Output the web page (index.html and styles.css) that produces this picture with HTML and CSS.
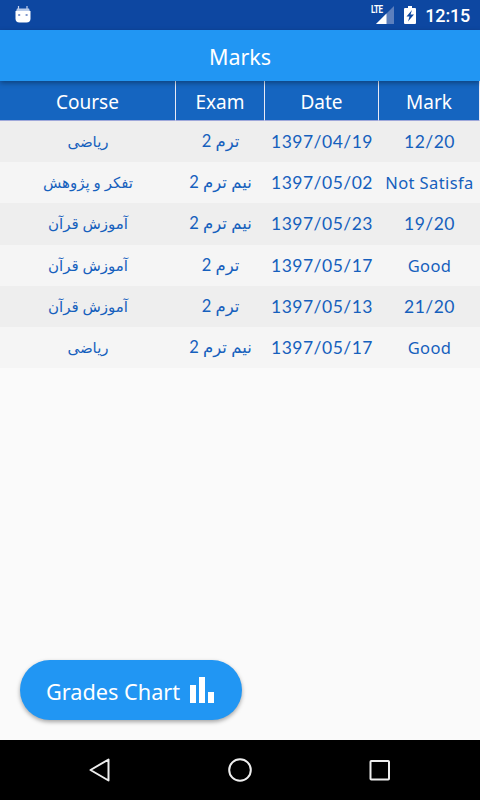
FILE: index.html
```
<!doctype html>
<html lang="en">
  <head>
    <meta charset="utf-8">
    <title>Marks</title>
    <link rel="stylesheet" href="styles.css">
  </head>
  <body>
    <div class="status">
      <svg class="debug" width="16" height="18" viewBox="0 0 16 18">
        <path d="M3.500 1v4M12 1v4" stroke="#c5d3ee" stroke-width="1.2"/>
        <path d="M2 3.500h12l1 3H1z" fill="#b9cbe9"/>
        <path d="M.5 6h15v7.500q0 4-4 4h-7q-4 0-4-4z" fill="#fff"/>
        <path d="M3.200 9h2v2h-2zM10.600 9h2v2h-2z" fill="#8198cc"/>
      </svg>
      <div class="lte"><span>LTE</span>
        <svg width="18" height="18" viewBox="0 0 18 18">
          <path d="M18 0v18H0z" fill="#5c7fbd"/>
          <path d="M10.500 7.500V18H0z" fill="#fff"/>
        </svg>
      </div>
      <svg class="battery" width="12" height="18" viewBox="0 0 12 18">
        <path d="M4 0h4v2h3q1 0 1 1v14q0 1-1 1H1q-1 0-1-1V3q0-1 1-1h3z" fill="#fff"/>
        <path d="M8 4L2.500 10.500h3l-1.500 5 6-7h-3.500z" fill="#0d47a1"/>
      </svg>
      <span class="clock">12:15</span>
    </div>
    <h1>Marks</h1>
    <div class="content">
      <table>
        <colgroup><col class="c1"><col class="c2"><col class="c3"><col class="c4"></colgroup>
        <thead>
          <tr><th>Course</th><th>Exam</th><th>Date</th><th>Mark</th></tr>
        </thead>
        <tbody>
          <tr><td class="fa">ریاضی</td><td class="fa exam">ترم 2</td><td>1397/04/19</td><td>12/20</td></tr>
          <tr><td class="fa">تفکر و پژوهش</td><td class="fa exam">نیم ترم 2</td><td>1397/05/02</td><td class="word">Not Satisfa</td></tr>
          <tr><td class="fa">آموزش قرآن</td><td class="fa exam">نیم ترم 2</td><td>1397/05/23</td><td>19/20</td></tr>
          <tr><td class="fa">آموزش قرآن</td><td class="fa exam">ترم 2</td><td>1397/05/17</td><td class="word">Good</td></tr>
          <tr><td class="fa">آموزش قرآن</td><td class="fa exam">ترم 2</td><td>1397/05/13</td><td>21/20</td></tr>
          <tr><td class="fa">ریاضی</td><td class="fa exam">نیم ترم 2</td><td>1397/05/17</td><td class="word">Good</td></tr>
        </tbody>
      </table>
      <div class="chart">
        <span>Grades Chart</span>
        <svg width="24" height="26" viewBox="0 0 24 26" fill="#fff">
          <path d="M0 8h6v18H0zM9 0h6v26H9zM18 15h6v11h-6z"/>
        </svg>
      </div>
    </div>
    <div class="nav">
      <svg width="24" height="26" viewBox="0 0 24 26"><path d="M20.500 2.500v21L2.500 13z"/></svg>
      <svg width="26" height="26" viewBox="0 0 26 26"><circle cx="13" cy="13" r="10.800"/></svg>
      <svg width="24" height="26" viewBox="0 0 24 26"><rect x="2.500" y="4" width="18.500" height="18.500" rx=".8"/></svg>
    </div>
  </body>
</html>
```

FILE: styles.css
```
body {
  margin: 0;
  height: 800px;
  display: flex;
  flex-direction: column;
  overflow: hidden;
  background-color: #fafafa;
  font-family: "Noto Sans", "DejaVu Sans", sans-serif;
}

.status {
  height: 30px;
  flex: none;
  display: flex;
  align-items: center;
  box-sizing: border-box;
  padding: 0 10px 0 15px;
  background-color: #0d47a1;
  color: #fff;
}
.debug {
  margin: -3px auto 0 0;
}
.lte {
  display: flex;
  align-items: flex-start;
  width: 23px;
}
.lte span {
  width: 5px;
  font: bold 10px/8px "Roboto", sans-serif;
  letter-spacing: -0.6px;
  white-space: nowrap;
  transform: scaleX(0.8);
  transform-origin: 0 0;
  z-index: 1;
}
.lte svg {
  flex: none;
}
.battery {
  margin-left: 10px;
}
.clock {
  margin: 2px 0 0 9px;
  font: 500 18px/30px "Roboto", sans-serif;
  letter-spacing: -0.2px;
}

h1 {
  height: 51px;
  flex: none;
  margin: 0;
  background-color: #2196f3;
  box-shadow: 0 2px 5px rgba(0,0,0,0.35);
  color: #fff;
  font-size: 21.5px;
  font-weight: 400;
  line-height: 54px;
  text-align: center;
  z-index: 1;
}

.content {
  flex: 1;
  display: flex;
  flex-direction: column;
  justify-content: space-between;
  align-items: flex-start;
}

table {
  width: 480px;
  table-layout: fixed;
  border-collapse: separate;
  border-spacing: 0;
}
.c1 { width: 176px; }
.c2 { width: 89px; }
.c3 { width: 114px; }
.c4 { width: 101px; }

th, td {
  box-sizing: border-box;
  padding: 0;
  text-align: center;
  white-space: nowrap;
  overflow: hidden;
}
th {
  height: 40px;
  padding-top: 3px;
  background-color: #1565c0;
  border-right: 1px solid #e8eaf6;
  border-bottom: 1px solid #9fa8da;
  color: #fff;
  font-size: 19px;
  font-weight: 400;
  line-height: 36px;
}
td {
  height: 41.2px;
  color: #1560bd;
  font-family: Lato, "DejaVu Sans", sans-serif;
  font-size: 17.5px;
  line-height: 41px;
  letter-spacing: 0.5px;
  background-color: #f5f5f5;
}
tr:nth-child(odd) td {
  background-color: #eee;
}
.fa {
  direction: rtl;
  font-size: 15px;
  letter-spacing: 0;
}
.exam {
  font-size: 16.5px;
}
.word {
  font-family: "Noto Sans", sans-serif;
  font-size: 16.5px;
  letter-spacing: 0.4px;
}

.chart {
  display: flex;
  align-items: center;
  justify-content: space-between;
  box-sizing: border-box;
  width: 222px;
  height: 60px;
  margin: 0 0 20px 20px;
  padding: 0 28px 0 26px;
  border-radius: 30px;
  background-color: #2196f3;
  box-shadow: 0 2px 4px rgba(0,0,0,0.35);
  color: #fff;
  font-size: 21.7px;
}
.chart span {
  padding-top: 2px;
}

.nav {
  height: 60px;
  flex: none;
  display: flex;
  align-items: center;
  justify-content: space-between;
  box-sizing: border-box;
  padding: 0 88px;
  background-color: #000;
}
.nav svg {
  fill: none;
  stroke: #eee;
  stroke-width: 2;
  stroke-linejoin: round;
}
```
